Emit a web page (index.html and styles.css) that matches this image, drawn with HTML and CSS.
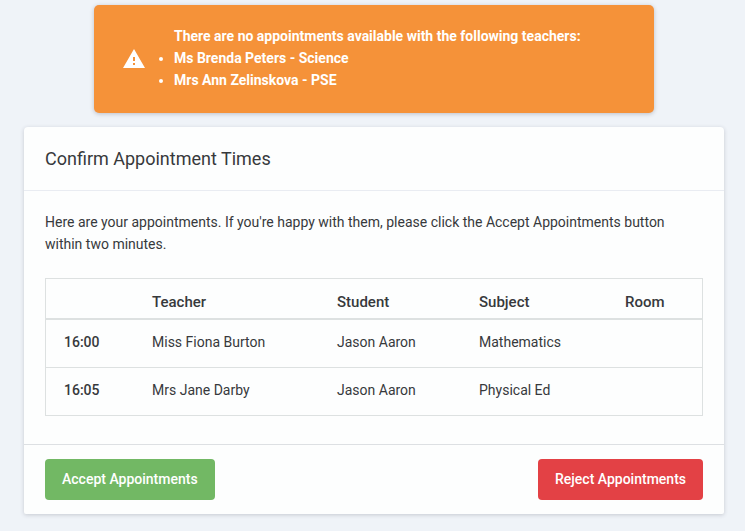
FILE: index.html
```html
<!DOCTYPE html>
<html lang="en">
<head>
<meta charset="utf-8">
<meta name="viewport" content="width=device-width, initial-scale=1">
<title>Confirm Appointment Times</title>
<link rel="stylesheet" href="styles.css">
</head>
<body>
<div class="alert" role="alert">
  <svg class="alert-icon" viewBox="0 0 22 19" aria-hidden="true"><path fill="#fff" fill-rule="evenodd" d="M11 0L22 19H0zM10 8v4h2V8zM10 14v2h2v-2z"/></svg>
  <div>
    <p class="alert-title">There are no appointments available with the following teachers:</p>
    <ul class="alert-list">
      <li>Ms Brenda Peters - Science</li>
      <li>Mrs Ann Zelinskova - PSE</li>
    </ul>
  </div>
</div>
<main class="card">
  <header class="card-header"><h1>Confirm Appointment Times</h1></header>
  <section class="card-body">
    <p class="intro">Here are your appointments. If you're happy with them, please click the Accept Appointments button within two minutes.</p>
    <table class="appointments">
      <colgroup><col class="col-time"><col class="col-teacher"><col class="col-student"><col class="col-subject"><col></colgroup>
      <thead>
        <tr><td></td><th scope="col">Teacher</th><th scope="col">Student</th><th scope="col">Subject</th><th scope="col">Room</th></tr>
      </thead>
      <tbody>
        <tr><th scope="row">16:00</th><td>Miss Fiona Burton</td><td>Jason Aaron</td><td>Mathematics</td><td></td></tr>
        <tr><th scope="row">16:05</th><td>Mrs Jane Darby</td><td>Jason Aaron</td><td>Physical Ed</td><td></td></tr>
      </tbody>
    </table>
  </section>
  <footer class="card-footer">
    <button type="button" class="btn btn-accept">Accept Appointments</button>
    <button type="button" class="btn btn-reject">Reject Appointments</button>
  </footer>
</main>
</body>
</html>
```
FILE: styles.css
```css
* {
  box-sizing: border-box;
}

body {
  margin: 0;
  padding: 5px 21px 16px 24px;
  background: #eff3f8;
  color: #37393c;
  font: 14px/22px Roboto, "Liberation Sans", sans-serif;
}

.alert {
  display: flex;
  align-items: center;
  width: 80%;
  margin: 0 auto 14px;
  padding: 20px 29px 22px;
  border-radius: 5px;
  background: #f59239;
  color: #fff;
  font-weight: 700;
  box-shadow: 0 1px 4px rgba(40, 40, 60, 0.25);
}

.alert-icon {
  flex: none;
  width: 22px;
  height: 19px;
  margin-right: 29px;
}

.alert-title,
.alert-list {
  margin: 0;
  padding: 0;
}

.card {
  border-radius: 4px 4px 2px 2px;
  background: #fdfefe;
  box-shadow: 0 1px 4px rgba(40, 40, 60, 0.2);
}

.card-header {
  padding: 21px;
  border-bottom: 1px solid #e9ecf2;
}

.card-header h1 {
  margin: 0;
  font-size: 18px;
  font-weight: 400;
  line-height: 21px;
}

.card-body {
  padding: 20px 21px 28px;
}

.intro {
  margin: 0 0 23px;
}

.appointments {
  width: 100%;
  border: 1px solid #dde1e1;
  border-spacing: 0;
  table-layout: fixed;
}

.appointments th,
.appointments td {
  padding: 11px 0 14px 18px;
  text-align: left;
}

.appointments th {
  font-weight: 500;
}

.appointments thead th,
.appointments thead td {
  padding: 12px 0 5px 18px;
  border-bottom: 2px solid #dde1e1;
  font-size: 15px;
}

.appointments tbody tr + tr > * {
  border-top: 1px solid #dde1e1;
}

.col-time {
  width: 88px;
}

.col-teacher {
  width: 185px;
}

.col-student {
  width: 142px;
}

.col-subject {
  width: 146px;
}

.card-footer {
  display: flex;
  justify-content: space-between;
  padding: 14px 21px;
  border-top: 1px solid #dde0e3;
}

.btn {
  padding: 9px 17px 10px;
  border: 0;
  border-radius: 4px;
  color: #fff;
  font: 500 14px/22px Roboto, "Liberation Sans", sans-serif;
  cursor: pointer;
}

.btn-accept {
  background: #72b864;
}

.btn-reject {
  background: #e34145;
}
```
